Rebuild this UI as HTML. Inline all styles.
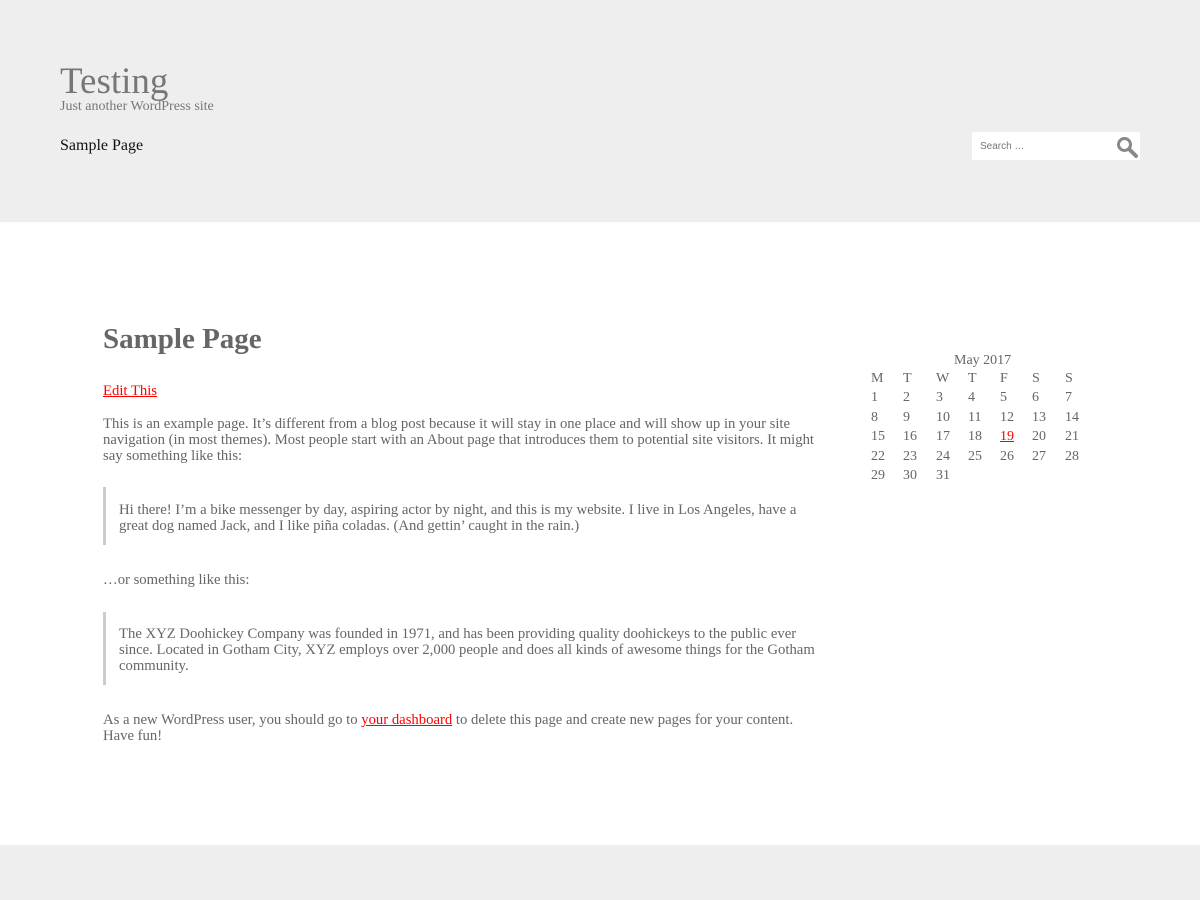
<!DOCTYPE html>
<html><head><meta charset="utf-8"><style>
body{margin:0;width:1200px;height:900px;background:#fff;font-family:"Liberation Serif",serif;color:#666;position:relative;overflow:hidden}
.a{position:absolute;white-space:nowrap}
#hdr{position:absolute;left:0;top:0;width:1200px;height:222px;background:#eee}
#ftr{position:absolute;left:0;top:845px;width:1200px;height:55px;background:#eee}
.p{font-size:14.7px;line-height:16px;letter-spacing:0}
a{color:#f00;text-decoration:underline}
.bq{position:absolute;left:103px;width:3px;background:#ccc}
</style></head><body>
<div id="hdr"></div>
<div class="a" style="left:60px;top:60px;font-size:37px;color:#777">Testing</div>
<div class="a" style="left:60px;top:99px;font-size:14px;color:#777">Just another WordPress site</div>
<div class="a" style="left:60px;top:137px;font-size:16px;color:#111">Sample Page</div>
<div class="a" style="left:972px;top:132px;width:168px;height:28px;background:#fff"></div>
<div class="a" style="left:980px;top:141px;font-family:'Liberation Sans',sans-serif;font-size:10px;color:#777">Search …</div>
<svg class="a" style="left:1115px;top:135px" width="24" height="24" viewBox="0 0 24 24"><circle cx="9.5" cy="9.5" r="6" fill="none" stroke="#888" stroke-width="3"/><path d="M14 14 L21 21" stroke="#888" stroke-width="4" stroke-linecap="round"/></svg>

<div class="a" style="left:103px;top:323px;font-size:29px;font-weight:bold;color:#666">Sample Page</div>
<div class="a p" style="left:103px;top:383px"><a>Edit This</a></div>
<div class="a p" style="left:103px;top:416px">This is an example page. It’s different from a blog post because it will stay in one place and will show up in your site<br>navigation (in most themes). Most people start with an About page that introduces them to potential site visitors. It might<br>say something like this:</div>
<div class="bq" style="top:487px;height:58px"></div>
<div class="a p" style="left:119px;top:502px">Hi there! I’m a bike messenger by day, aspiring actor by night, and this is my website. I live in Los Angeles, have a<br>great dog named Jack, and I like piña coladas. (And gettin’ caught in the rain.)</div>
<div class="a p" style="left:103px;top:572px">…or something like this:</div>
<div class="bq" style="top:612px;height:73px"></div>
<div class="a p" style="left:119px;top:626px">The XYZ Doohickey Company was founded in 1971, and has been providing quality doohickeys to the public ever<br>since. Located in Gotham City, XYZ employs over 2,000 people and does all kinds of awesome things for the Gotham<br>community.</div>
<div class="a p" style="left:103px;top:712px">As a new WordPress user, you should go to <a>your dashboard</a> to delete this page and create new pages for your content.<br>Have fun!</div>

<div class="a" style="left:954px;top:353px;font-size:14px">May 2017</div>
<div id="cal"></div>
<script>
var xs=[871,903,936,968,1000,1032,1065],ys=[371,390,410,429,449,468];
var h=['M','T','W','T','F','S','S'],s='';
h.forEach((t,i)=>s+='<div class="a" style="font-size:14px;left:'+xs[i]+'px;top:'+ys[0]+'px">'+t+'</div>');
for(var d=1;d<=31;d++){var i=d-1,r=Math.floor(i/7)+1,c=i%7;
s+='<div class="a" style="font-size:14px;left:'+xs[c]+'px;top:'+ys[r]+'px">'+(d==19?'<a>19</a>':d)+'</div>';}
document.getElementById('cal').innerHTML=s;
</script>
<div id="ftr"></div>
</body></html>
